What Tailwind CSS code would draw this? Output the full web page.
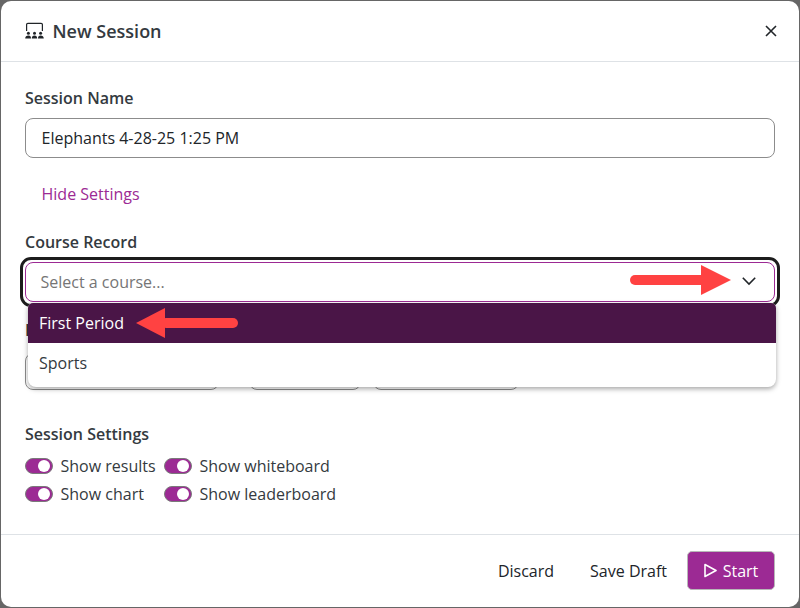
<!DOCTYPE html>
<html>
<head>
<meta charset="utf-8">
<script src="https://cdn.jsdelivr.net/npm/@tailwindcss/browser@4"></script>
</head>
<body class="m-0 bg-[#666666]">
<div class="w-[800px] h-[608px] overflow-hidden p-px font-['Open_Sans',sans-serif] text-[#212529]">
  <div class="relative w-[798px] h-[606px] bg-white rounded-[10px] flex flex-col">
    <header class="h-[61px] shrink-0 border-b border-[#dee2e6] flex items-center justify-between pl-6 pr-[21px]">
      <div class="flex items-center gap-[8px]">
        <svg class="w-5 h-5" viewBox="0 0 20 20" fill="none" stroke="#212529">
          <path d="M1.6 10V3.6A1.3 1.3 0 0 1 2.9 2.3h13.2A1.3 1.3 0 0 1 17.4 3.6V10" stroke-width="1.2"/>
          <g fill="#212529" stroke="none">
            <circle cx="3.4" cy="12.2" r="1.5"/><circle cx="9.5" cy="12.2" r="1.5"/><circle cx="15.6" cy="12.2" r="1.5"/>
            <path d="M0.2 17.6c0-2.2 1.2-3.2 3.2-3.2s2.6 1 2.6 3.2zM6.8 17.6c0-2.2 1-3.2 2.7-3.2s2.7 1 2.7 3.2zM13 17.6c0-2.2 .8-3.2 2.6-3.2s3.2 1 3.2 3.2z"/>
          </g>
        </svg>
        <h2 class="text-[18px] leading-6 font-semibold text-[#343a40] -ml-[0.5px]">New Session</h2>
      </div>
      <svg class="w-[14px] h-[14px]" viewBox="0 0 14 14" fill="none" stroke="#212529" stroke-width="1.6"><path d="M2 2l10 10M12 2L2 12"/></svg>
    </header>

    <main class="flex-1 px-6 relative">
      <label class="block mt-6 text-[16px] leading-6 font-semibold text-[#343a40]">Session Name</label>
      <div class="mt-2 h-10 border border-[#8c8c8c] rounded-lg flex items-center pl-[15.5px] pr-4 text-[16px]">Elephants 4-28-25 1:25 PM</div>
      <div class="mt-6 pl-[16.5px] text-[16px] leading-6 text-[#9c2a94]">Hide Settings</div>

      <label class="block mt-6 text-[16px] leading-6 font-semibold text-[#343a40]">Course Record</label>
      <div class="relative mt-2">
        <div class="absolute -inset-[5px] rounded-[11px] border-[3.5px] border-[#1c1c1c]"></div>
        <div class="relative h-10 border border-[#9c2a94] rounded-lg flex items-center justify-between pl-[14.5px] pr-[18px] text-[16px] text-[#757575] bg-white">
          <span>Select a course...</span>
          <svg class="w-[14px] h-[14px] -mt-[3px]" viewBox="0 0 14 14" fill="none" stroke="#212529" stroke-width="1.6"><path d="M.8 3.8L7 10l6.2-6.2"/></svg>
        </div>
      </div>

      <div class="mt-4 relative">
        <div class="text-[16px] leading-6 font-semibold text-[#343a40]">Hosting</div>
        <div class="flex mt-[11px]">
          <div class="w-[194px] h-[37px] border border-[#8c8c8c] rounded-lg"></div>
          <div class="ml-[30px] w-[112px] h-[37px] border border-[#8c8c8c] rounded-lg"></div>
          <div class="ml-3 w-[146px] h-[37px] border border-[#8c8c8c] rounded-lg"></div>
        </div>
      </div>

      <div class="mt-8 text-[16px] leading-6 font-semibold text-[#343a40]">Session Settings</div>
      <div class="mt-2 grid grid-cols-[139px_1fr] gap-y-1 text-[16px] leading-6 text-[#343a40]">
        <div class="flex items-center gap-[7.5px]"><span class="w-7 h-4 rounded-full bg-[#9c2a94] border border-[#7a7a7a] flex justify-end items-center pr-[2px]"><span class="w-3 h-3 rounded-full bg-white"></span></span>Show results</div>
        <div class="flex items-center gap-[7.5px]"><span class="w-7 h-4 rounded-full bg-[#9c2a94] border border-[#7a7a7a] flex justify-end items-center pr-[2px]"><span class="w-3 h-3 rounded-full bg-white"></span></span>Show whiteboard</div>
        <div class="flex items-center gap-[7.5px]"><span class="w-7 h-4 rounded-full bg-[#9c2a94] border border-[#7a7a7a] flex justify-end items-center pr-[2px]"><span class="w-3 h-3 rounded-full bg-white"></span></span>Show chart</div>
        <div class="flex items-center gap-[7.5px]"><span class="w-7 h-4 rounded-full bg-[#9c2a94] border border-[#7a7a7a] flex justify-end items-center pr-[2px]"><span class="w-3 h-3 rounded-full bg-white"></span></span>Show leaderboard</div>
      </div>
    </main>

    <footer class="h-[73px] shrink-0 border-t border-[#dee2e6] flex items-center justify-end pr-6 text-[16px] text-[#212529]">
      <span class="mr-9">Discard</span>
      <span class="mr-5">Save Draft</span>
      <span class="w-[88px] h-[39px] mb-px rounded-[5px] bg-[#9c2a94] border border-[#b8b8b8] text-white flex items-center justify-center gap-[6px]">
        <svg class="w-[13px] h-[15px]" viewBox="0 0 13 15" fill="none" stroke="white" stroke-width="1.6" stroke-linejoin="round"><path d="M1 1.5l11 6-11 6z"/></svg>
        Start
      </span>
    </footer>

    <!-- open dropdown overlay -->
    <div class="absolute left-[27px] top-[302px] w-[748px] h-[84px] bg-white rounded-b-lg rounded-t-[5px] shadow-[0_2px_5px_rgba(0,0,0,0.35)] overflow-hidden text-[16px] text-[#343a40]">
      <div class="h-10 bg-[#4a1547] text-white flex items-center pl-[11px]">First Period</div>
      <div class="h-10 flex items-center pl-[11px]">Sports</div>
    </div>

    <!-- annotation arrows -->
    <svg class="absolute left-[629px] top-[264px]" width="104" height="32" viewBox="0 0 104 32" fill="#ff4242">
      <rect x="0" y="10" width="76" height="10" rx="5"/><path d="M71 0l30 15-30 15z"/>
    </svg>
    <svg class="absolute left-[134px] top-[307px]" width="104" height="32" viewBox="0 0 104 32" fill="#ff4242">
      <rect x="26" y="10" width="77" height="10" rx="5"/><path d="M30 0L1 15l29 15z"/>
    </svg>
  </div>
</div>
</body>
</html>
